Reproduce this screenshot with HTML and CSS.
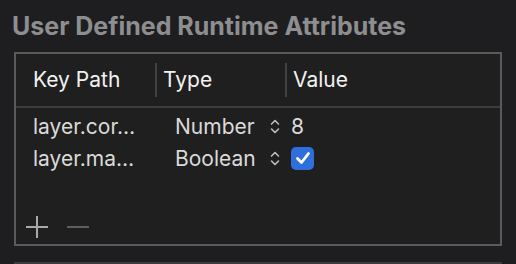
FILE: index.html
```html
<!DOCTYPE html>
<html lang="en">
<head>
  <meta charset="UTF-8" />
  <title>User Defined Runtime Attributes</title>
  <link rel="stylesheet" href="styles.css">
</head>
<body>
  <div class="panel">
    <h2 class="title">User Defined Runtime Attributes</h2>

    <div class="attr-box">
      <div class="attr-head">
        <div class="col col-key">Key Path</div>
        <div class="col col-type">Type</div>
        <div class="col col-value">Value</div>
      </div>

      <div class="attr-row">
        <div class="cell cell-key">layer.cor…</div>
        <div class="cell cell-type">
          <span>Number</span>
          <svg class="stepper" width="10" height="15" viewBox="0 0 10 15">
            <path d="M1.5 5 L5 1.5 L8.5 5 M1.5 10 L5 13.5 L8.5 10" fill="none" stroke="#bdbdbd" stroke-width="1.6" stroke-linecap="round" stroke-linejoin="round"/>
          </svg>
        </div>
        <div class="cell cell-value">8</div>
      </div>

      <div class="attr-row">
        <div class="cell cell-key">layer.ma…</div>
        <div class="cell cell-type">
          <span>Boolean</span>
          <svg class="stepper" width="10" height="15" viewBox="0 0 10 15">
            <path d="M1.5 5 L5 1.5 L8.5 5 M1.5 10 L5 13.5 L8.5 10" fill="none" stroke="#bdbdbd" stroke-width="1.6" stroke-linecap="round" stroke-linejoin="round"/>
          </svg>
        </div>
        <div class="cell cell-value">
          <span class="checkbox">
            <svg width="18" height="18" viewBox="0 0 18 18">
              <path d="M3.5 9.5 L7.5 13.5 L14.5 4.5" fill="none" stroke="#fff" stroke-width="2.8" stroke-linecap="round" stroke-linejoin="round"/>
            </svg>
          </span>
        </div>
      </div>

      <div class="attr-foot">
        <svg width="22" height="22" viewBox="0 0 22 22">
          <path d="M11 0 V22 M0 11 H22" stroke="#a9a9a9" stroke-width="2"/>
        </svg>
        <svg width="22" height="22" viewBox="0 0 22 22">
          <path d="M0 11 H22" stroke="#5e5e5e" stroke-width="2"/>
        </svg>
      </div>
    </div>

    <div class="next-box"></div>
  </div>
</body>
</html>
```

FILE: styles.css
```css
* {
  box-sizing: border-box;
}
body {
  margin: 0;
  background: #1e1e20;
  font-family: 'Inter', 'Liberation Sans', sans-serif;
  color: #dadada;
  overflow: hidden;
}
.panel {
  padding: 12px 14px 0 14px;
  width: 516px;
}
.title {
  margin: 0 0 12px -2px;
  font-size: 25px;
  font-weight: 700;
  color: #8e8e90;
  line-height: 28px;
}

/* === Attribute table === */
.attr-box {
  border: 2px solid #5a5a5a;
  background: #1f1f1f;
  height: 194px;
  width: 488px;
  display: flex;
  flex-direction: column;
}
.attr-head {
  display: grid;
  grid-template-columns: 139px 130px 1fr;
  height: 54px;
  align-items: center;
  border-bottom: 2px solid #3c3c3c;
  color: #f2f2f2;
  font-size: 21px;
}
.col {
  height: 34px;
  line-height: 34px;
}
.col-key { padding-left: 17px; }
.col-type,
.col-value {
  border-left: 2px solid #424242;
  padding-left: 6px;
}
.attr-row {
  display: grid;
  grid-template-columns: 139px 130px 1fr;
  height: 32px;
  align-items: center;
  font-size: 21px;
}
.attr-head + .attr-row { margin-top: 2px; }
.cell-key { padding-left: 17px; }
.cell-type {
  display: flex;
  align-items: center;
  padding-left: 20px;
}
.cell-type span { width: 95px; }
.stepper { display: block; }
.cell-value {
  display: flex;
  align-items: center;
  padding-left: 6px;
}
.checkbox {
  width: 23px;
  height: 23px;
  border-radius: 5px;
  background: #2f6fdc;
  display: flex;
  align-items: center;
  justify-content: center;
}
.checkbox svg { display: block; }
.attr-foot {
  margin-top: auto;
  display: flex;
  gap: 19px;
  padding: 0 0 6px 10px;
}
.attr-foot svg { display: block; }
.next-box {
  margin-top: 16px;
  border-top: 2px solid #3a3a3c;
  width: 488px;
  height: 4px;
}
```
